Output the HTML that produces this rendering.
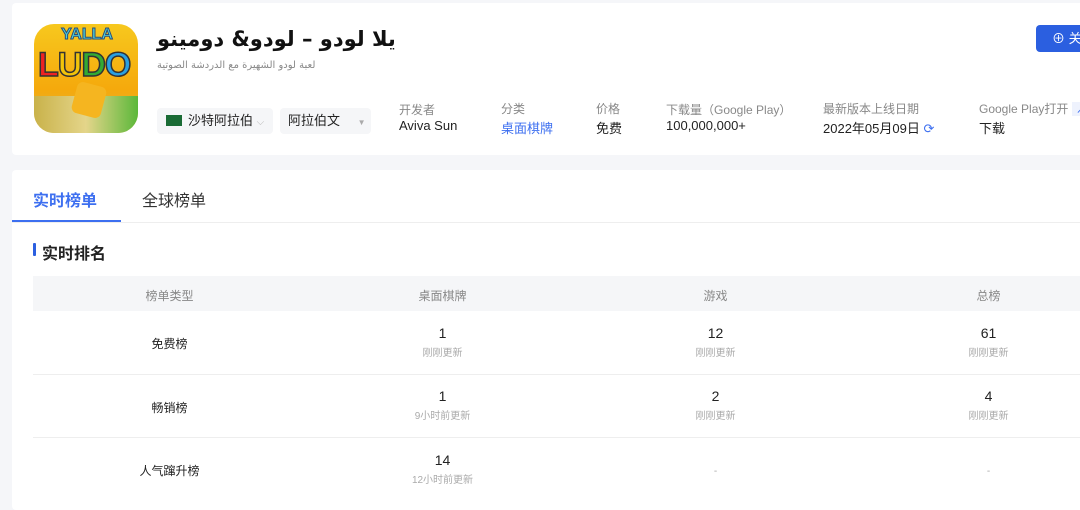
<!DOCTYPE html><html><head><meta charset="utf-8"><style>
*{margin:0;padding:0;box-sizing:border-box}
body{width:1080px;height:497px;overflow:hidden;background:#f5f6f9;font-family:"Liberation Sans","Noto Sans CJK SC",sans-serif;color:#222;position:relative}
.a{position:absolute;white-space:nowrap}
.card{background:#fff;border-radius:4px}
.lbl{font-size:12px;color:#888}
.val{font-size:13px;color:#222}
.c{text-align:center;width:273px}
.c .val{font-size:14px;line-height:18px}
.sub{font-size:10px;color:#aaa;margin-top:2px}
</style></head><body>
<div class="a card" style="left:12px;top:3px;width:1080px;height:152px"></div>
<div class="a" style="left:34px;top:24px;width:104px;height:109px;border-radius:20px;background:linear-gradient(#f7c81e,#f5a90c 60%,#d9b94a);overflow:hidden">
 <div class="a" style="left:0;top:72px;width:104px;height:40px;background:linear-gradient(90deg,#c9b24a,#e4d58a 50%,#5bb83a)"></div>
 <div class="a" style="left:22px;top:2px;width:62px;font:bold 16px 'Liberation Sans';color:#4ed5d9;-webkit-text-stroke:1px #2a4a7a;text-align:center">YALLA</div>
 <div class="a" style="left:4px;top:22px;width:100px;font:900 34px 'Liberation Sans';letter-spacing:-1px;-webkit-text-stroke:1.5px #333"><span style="color:#e22">L</span><span style="color:#f2c40a">U</span><span style="color:#3a3">D</span><span style="color:#2aa0e0">O</span></div>
 <div class="a" style="left:40px;top:60px;width:30px;height:32px;background:#f5b520;border-radius:6px;transform:rotate(15deg)"></div>
</div>
<div class="a" style="left:157px;top:27px;font-size:21px;font-weight:bold;color:#111;font-family:'DejaVu Sans',sans-serif;letter-spacing:-0.5px">يلا لودو – لودو& دومينو</div>
<div class="a" style="left:157px;top:60px;font-size:10px;color:#888;font-family:'DejaVu Sans',sans-serif">لعبة لودو الشهيرة مع الدردشة الصوتية</div>
<div class="a" style="left:157px;top:108px;width:116px;height:26px;background:#f5f6f8;border-radius:4px;font-size:13px;line-height:26px;padding-left:9px"><span style="display:inline-block;width:16px;height:11px;background:#1a6b35;vertical-align:-1px;margin-right:6px"></span>沙特阿拉伯 <span style="color:#bbb;font-size:10px">⌵</span></div>
<div class="a" style="left:280px;top:108px;width:91px;height:26px;background:#f5f6f8;border-radius:4px;font-size:13px;line-height:26px;padding-left:8px">阿拉伯文 <span style="color:#aaa;font-size:8px;margin-left:14px">▼</span></div>
<div class="a lbl" style="left:399px;top:101px">开发者</div><div class="a val" style="left:399px;top:118px">Aviva Sun</div>
<div class="a lbl" style="left:501px;top:100px">分类</div><div class="a val" style="left:501px;top:118px;color:#3d6ff0">桌面棋牌</div>
<div class="a lbl" style="left:596px;top:100px">价格</div><div class="a val" style="left:596px;top:118px">免费</div>
<div class="a lbl" style="left:666px;top:101px">下载量（Google Play）</div><div class="a val" style="left:666px;top:118px">100,000,000+</div>
<div class="a lbl" style="left:823px;top:100px">最新版本上线日期</div><div class="a val" style="left:823px;top:118px">2022年05月09日 <span style="color:#3d6ff0">⟳</span></div>
<div class="a lbl" style="left:979px;top:100px">Google Play打开 <span style="background:#eef2fd;color:#3d6ff0;padding:0 4px">↗</span></div><div class="a val" style="left:979px;top:118px">下载</div>
<div class="a" style="left:1036px;top:25px;width:60px;height:27px;background:#2b5fe0;border-radius:4px;color:#fff;font-size:13px;line-height:27px;padding-left:16px">⊕ 关</div>
<div class="a card" style="left:12px;top:170px;width:1080px;height:340px"></div>
<div class="a" style="left:12px;top:222px;width:1080px;height:1px;background:#eee"></div>
<div class="a" style="left:33px;top:187px;font-size:16px;font-weight:bold;color:#3d6ff0">实时榜单</div>
<div class="a" style="left:12px;top:220px;width:109px;height:2px;background:#3d6ff0"></div>
<div class="a" style="left:142px;top:187px;font-size:16px;color:#333">全球榜单</div>
<div class="a" style="left:33px;top:243px;width:3px;height:13px;background:#2b5fe0;border-radius:1px"></div>
<div class="a" style="left:42px;top:240px;font-size:16px;font-weight:bold;color:#222">实时排名</div>
<div class="a" style="left:33px;top:276px;width:1060px;height:35px;background:#f5f6f8"></div>
<div class="a" style="left:33px;top:374px;width:1060px;height:1px;background:#eee"></div>
<div class="a" style="left:33px;top:437px;width:1060px;height:1px;background:#eee"></div>
<div class="a c lbl" style="left:33px;top:287px;width:273px;font-size:12px">榜单类型</div>
<div class="a c lbl" style="left:306px;top:287px">桌面棋牌</div>
<div class="a c lbl" style="left:579px;top:287px">游戏</div>
<div class="a c lbl" style="left:852px;top:287px">总榜</div>
<div class="a c val" style="left:33px;top:335px;font-size:12px">免费榜</div>
<div class="a c val" style="left:33px;top:399px;font-size:12px">畅销榜</div>
<div class="a c val" style="left:33px;top:462px;font-size:12px">人气蹿升榜</div>
<div class="a c" style="left:306px;top:324px"><div class="val">1</div><div class="sub">刚刚更新</div></div>
<div class="a c" style="left:579px;top:324px"><div class="val">12</div><div class="sub">刚刚更新</div></div>
<div class="a c" style="left:852px;top:324px"><div class="val">61</div><div class="sub">刚刚更新</div></div>
<div class="a c" style="left:306px;top:387px"><div class="val">1</div><div class="sub">9小时前更新</div></div>
<div class="a c" style="left:579px;top:387px"><div class="val">2</div><div class="sub">刚刚更新</div></div>
<div class="a c" style="left:852px;top:387px"><div class="val">4</div><div class="sub">刚刚更新</div></div>
<div class="a c" style="left:306px;top:451px"><div class="val">14</div><div class="sub">12小时前更新</div></div>
<div class="a c sub" style="left:579px;top:464px">-</div>
<div class="a c sub" style="left:852px;top:464px">-</div>
</body></html>
